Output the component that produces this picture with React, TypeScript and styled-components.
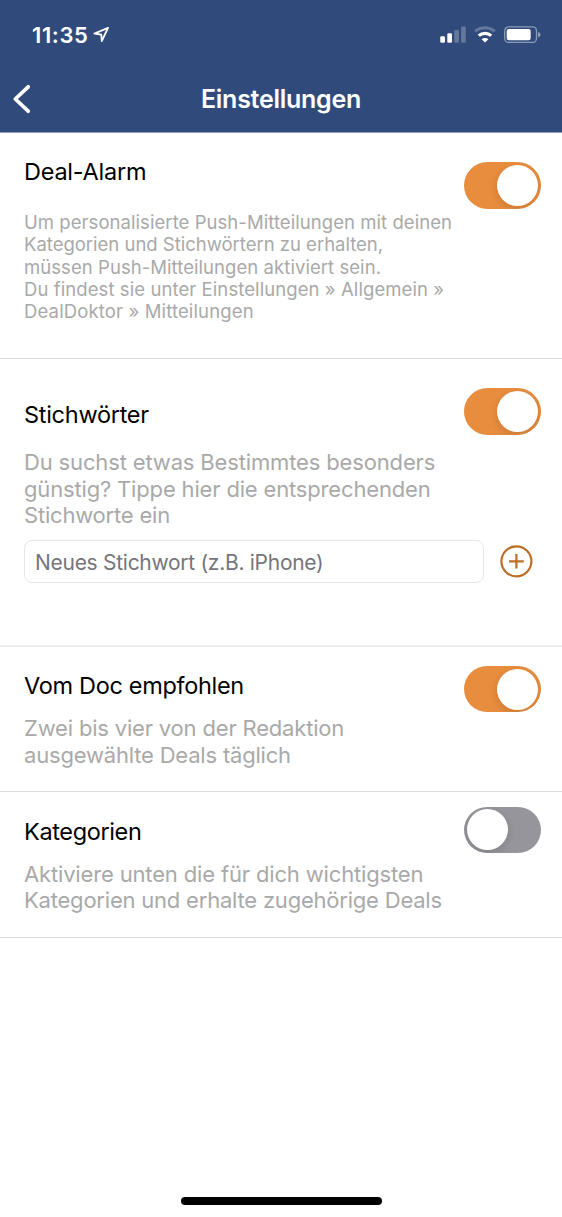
import React, { useState } from "react";
import styled, { createGlobalStyle } from "styled-components";

const GlobalStyle = createGlobalStyle`
  *, *::before, *::after { box-sizing: border-box; }
  body { margin: 0; background: #fff; }
`;

const Screen = styled.div`
  display: flex;
  flex-direction: column;
  width: 562px;
  height: 1217px;
  background: #fff;
  color: #000;
  font-family: Inter, "Liberation Sans", sans-serif;
  overflow: hidden;
`;

const Header = styled.header`
  height: 133px;
  background: #304b7b;
  border-bottom: 1px solid #8f9dba;
  color: #fff;
`;

const StatusBar = styled.div`
  display: flex;
  justify-content: space-between;
  align-items: flex-start;
  height: 66px;
  padding: 22px 21px 0 32px;
`;

const Clock = styled.div`
  display: flex;
  gap: 4.5px;
  font-size: 22px;
  line-height: 26px;
  font-weight: 600;
  letter-spacing: 0.6px;

  svg { margin-top: 4px; }
`;

const Indicators = styled.div`
  display: flex;
  align-items: flex-start;
  gap: 8px;
  padding-top: 4px;
`;

const NavBar = styled.div`
  display: grid;
  grid-template-columns: 60px 1fr 60px;
  align-items: center;
  height: 66px;
`;

const BackButton = styled.button`
  display: flex;
  width: 40px;
  padding: 0 0 0 12px;
  border: 0;
  background: none;
  color: inherit;
`;

const NavTitle = styled.h1`
  margin: 0;
  font-size: 25px;
  line-height: 30px;
  font-weight: 600;
  letter-spacing: -0.26px;
  text-align: center;
`;

const Section = styled.section<{ $height: number; $divider?: number }>`
  display: grid;
  grid-template-columns: 1fr auto;
  align-content: start;
  height: ${(p) => p.$height}px;
  padding: 0 21px 0 24px;
  border-bottom: ${(p) => p.$divider ?? 1}px solid ${(p) => (p.$divider ? "#eeeeee" : "#dcdcdc")};
`;

const Copy = styled.div<{ $top: number; $gap: number }>`
  display: flex;
  flex-direction: column;
  gap: ${(p) => p.$gap}px;
  padding-top: ${(p) => p.$top}px;
`;

const Title = styled.h2<{ $tracking?: number }>`
  margin: 0;
  font-size: 23.5px;
  line-height: 28px;
  font-weight: 400;
  letter-spacing: ${(p) => p.$tracking ?? -0.32}px;
`;

const Description = styled.p<{ $small?: boolean }>`
  margin: 0;
  color: #a9a9a9;
  font-size: ${(p) => (p.$small ? 18.5 : 22)}px;
  line-height: ${(p) => (p.$small ? 22.35 : 26.6)}px;
  white-space: nowrap;
`;

const Line = styled.span<{ $tracking: number }>`
  display: block;
  letter-spacing: ${(p) => p.$tracking}px;
`;

const Track = styled.button<{ $on: boolean; $top: number }>`
  display: flex;
  justify-content: ${(p) => (p.$on ? "flex-end" : "flex-start")};
  align-items: center;
  width: 76.6px;
  height: 46.6px;
  margin-top: ${(p) => p.$top}px;
  padding: 0 2.8px;
  border: 0;
  border-radius: 23.5px;
  background: ${(p) => (p.$on ? "#e88d3e" : "#96959b")};
  overflow: hidden;
`;

const Knob = styled.span`
  width: 41px;
  height: 41px;
  border-radius: 50%;
  background: #fff;
  box-shadow: 0 3px 8px rgba(0, 0, 0, 0.14);
`;

const KeywordForm = styled.div`
  display: flex;
  grid-column: 1 / -1;
  align-items: center;
  gap: 16px;
  margin-top: 11px;
`;

const KeywordInput = styled.input`
  width: 460px;
  height: 43px;
  padding: 1px 10px 0;
  border: 1px solid #e6e6e8;
  border-radius: 8px;
  background: #fff;
  font: 400 21px/26px Inter, "Liberation Sans", sans-serif;
  letter-spacing: -0.28px;
  outline: none;

  &::placeholder { color: #75757b; opacity: 1; }
`;

const AddButton = styled.button`
  display: flex;
  padding: 0;
  border: 0;
  background: none;
`;

const HomeIndicator = styled.div`
  width: 201px;
  height: 8px;
  margin: auto auto 12px;
  border-radius: 4px;
  background: #000;
`;

type Text = [string, number];

function Switch({ initial, top }: { initial: boolean; top: number }) {
  const [on, setOn] = useState(initial);
  return (
    <Track type="button" role="switch" aria-checked={on} $on={on} $top={top} onClick={() => setOn(!on)}>
      <Knob />
    </Track>
  );
}

function Lines({ lines, small }: { lines: Text[]; small?: boolean }) {
  return (
    <Description $small={small}>
      {lines.map(([text, tracking]) => (
        <Line key={text} $tracking={tracking}>{text}</Line>
      ))}
    </Description>
  );
}

const LocationIcon = () => (
  <svg width="16" height="17" viewBox="0 0 16 17" fill="none" stroke="#fff" strokeWidth="1.8" strokeLinejoin="round">
    <path d="M15 1.8 1.4 7.6l6.9 1 .5 6.6z" />
  </svg>
);

const SignalIcon = () => (
  <svg width="26" height="17" viewBox="0 0 26 17" fill="#fff">
    <rect x="0.3" y="10.3" width="4.7" height="6.4" rx="1.2" />
    <rect x="7.3" y="7.2" width="4.7" height="9.5" rx="1.2" />
    <rect x="14.3" y="4" width="4.7" height="12.7" rx="1.2" opacity="0.25" />
    <rect x="21.1" y="0.5" width="4.7" height="16.2" rx="1.2" opacity="0.25" />
  </svg>
);

const WifiIcon = () => (
  <svg width="22" height="17" viewBox="0 0 22 17" fill="none">
    <path d="M1.2 5.3C6.8.7 15.2.7 20.8 5.3" stroke="#fff" strokeWidth="3" opacity="0.25" />
    <path d="M4.8 9.6c3.5-3.1 8.9-3.1 12.4 0" stroke="#fff" strokeWidth="3.2" />
    <path d="M11 16.6 7.6 13.3c1.9-1.9 4.9-1.9 6.8 0z" fill="#fff" />
  </svg>
);

const BatteryIcon = () => (
  <svg width="37" height="17" viewBox="0 0 37 17" fill="none">
    <rect x="0.7" y="0.9" width="31.8" height="15.6" rx="4" stroke="#fff" strokeOpacity="0.45" strokeWidth="1.3" />
    <rect x="2.7" y="2.9" width="24" height="11.4" rx="2.2" fill="#fff" />
    <path d="M34.1 5.9c1.6.7 2.4 1.5 2.4 2.7s-.8 2-2.4 2.7z" fill="#fff" opacity="0.5" />
  </svg>
);

export default function App() {
  return (
    <Screen>
      <GlobalStyle />
      <Header>
        <StatusBar>
          <Clock>
            11:35
            <LocationIcon />
          </Clock>
          <Indicators>
            <SignalIcon />
            <WifiIcon />
            <BatteryIcon />
          </Indicators>
        </StatusBar>
        <NavBar>
          <BackButton aria-label="Zurück">
            <svg width="20" height="30" viewBox="0 0 20 30" fill="none" stroke="#fff" strokeWidth="3.7" strokeLinecap="round" strokeLinejoin="round">
              <path d="M16.2 2.8 3.3 15l12.9 12.2" />
            </svg>
          </BackButton>
          <NavTitle>Einstellungen</NavTitle>
        </NavBar>
      </Header>

      <Section $height={226}>
        <Copy $top={24.5} $gap={25.5}>
          <Title $tracking={-0.24}>Deal-Alarm</Title>
          <Lines
            small
            lines={[
              ["Um personalisierte Push-Mitteilungen mit deinen", 0.06],
              ["Kategorien und Stichwörtern zu erhalten,", -0.01],
              ["müssen Push-Mitteilungen aktiviert sein.", 0.06],
              ["Du findest sie unter Einstellungen » Allgemein »", 0.085],
              ["DealDoktor » Mitteilungen", 0.14],
            ]}
          />
        </Copy>
        <Switch initial top={29} />
      </Section>

      <Section $height={288} $divider={2}>
        <Copy $top={41.5} $gap={20.8}>
          <Title $tracking={-0.28}>Stichwörter</Title>
          <Lines
            lines={[
              ["Du suchst etwas Bestimmtes besonders", -0.15],
              ["günstig? Tippe hier die entsprechenden", -0.165],
              ["Stichworte ein", -0.2],
            ]}
          />
        </Copy>
        <Switch initial top={29.3} />
        <KeywordForm>
          <KeywordInput placeholder="Neues Stichwort (z.B. iPhone)" />
          <AddButton aria-label="Hinzufügen">
            <svg width="33" height="33" viewBox="0 0 33 33" fill="none" stroke="#bd6c24" strokeWidth="2.2">
              <circle cx="16.4" cy="16.3" r="15" />
              <path d="M9.1 16.3h14.6M16.4 9v14.6" />
            </svg>
          </AddButton>
        </KeywordForm>
      </Section>

      <Section $height={145}>
        <Copy $top={24.8} $gap={15.2}>
          <Title>Vom Doc empfohlen</Title>
          <Lines
            lines={[
              ["Zwei bis vier von der Redaktion", -0.18],
              ["ausgewählte Deals täglich", -0.19],
            ]}
          />
        </Copy>
        <Switch initial top={18.8} />
      </Section>

      <Section $height={146}>
        <Copy $top={25.5} $gap={15.2}>
          <Title $tracking={-0.37}>Kategorien</Title>
          <Lines
            lines={[
              ["Aktiviere unten die für dich wichtigsten", -0.155],
              ["Kategorien und erhalte zugehörige Deals", -0.21],
            ]}
          />
        </Copy>
        <Switch initial={false} top={14.5} />
      </Section>

      <HomeIndicator />
    </Screen>
  );
}
